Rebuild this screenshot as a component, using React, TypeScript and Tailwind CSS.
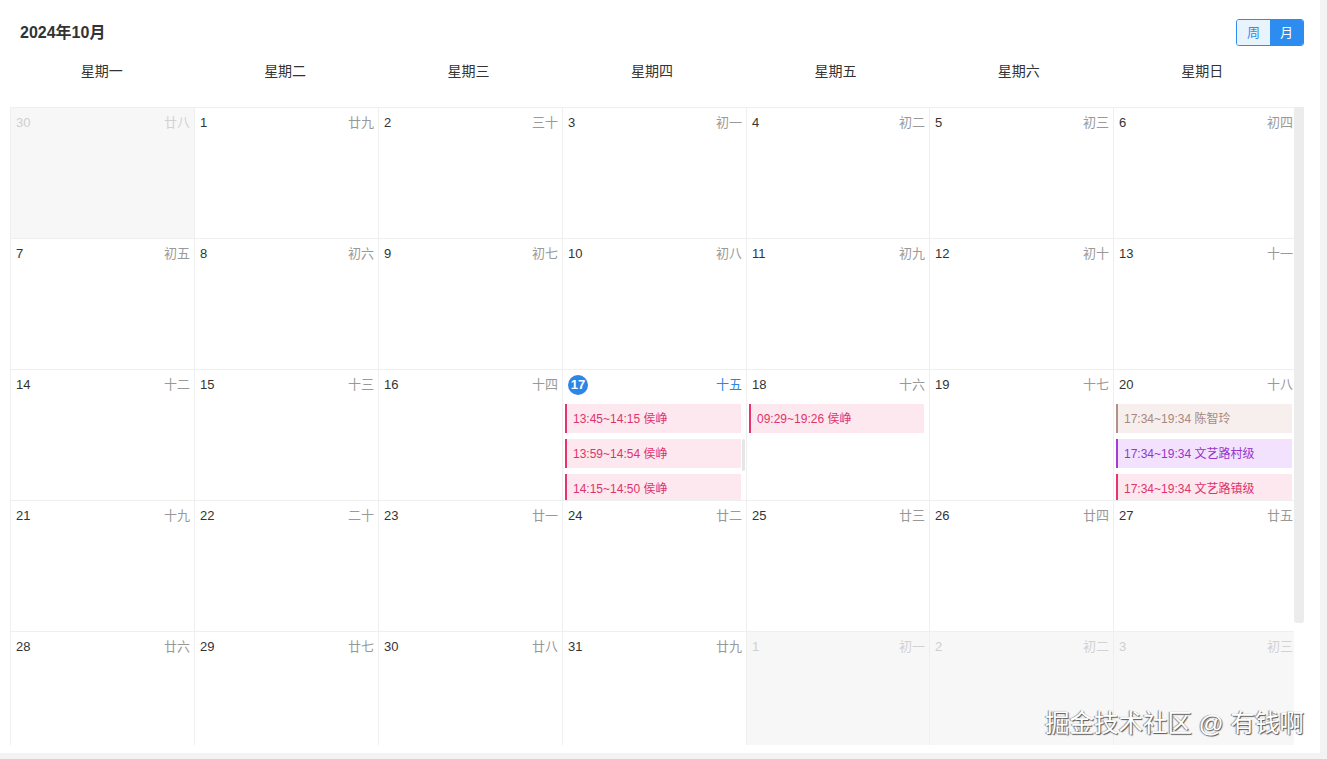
type CalEvent = { time: string; name: string; tone: "pink" | "brown" | "purple" };

type Day = { num: number; lunar: string; other?: boolean; today?: boolean; events?: CalEvent[] };

const toneClass: Record<CalEvent["tone"], string> = {
  pink: "bg-[#fde8ef] border-[#e8336d] text-[#e0336a]",
  brown: "bg-[#f6efed] border-[#b39188] text-[#a8887e]",
  purple: "bg-[#f2e2fe] border-[#a23bd8] text-[#9834cc]",
};

const weekNames = ["星期一", "星期二", "星期三", "星期四", "星期五", "星期六", "星期日"];

const lunarOct = [
  "廿九", "三十", "初一", "初二", "初三", "初四", "初五", "初六", "初七", "初八",
  "初九", "初十", "十一", "十二", "十三", "十四", "十五", "十六", "十七", "十八",
  "十九", "二十", "廿一", "廿二", "廿三", "廿四", "廿五", "廿六", "廿七", "廿八", "廿九",
];

const eventsByDay: Record<number, CalEvent[]> = {
  17: [
    { time: "13:45~14:15", name: "侯峥", tone: "pink" },
    { time: "13:59~14:54", name: "侯峥", tone: "pink" },
    { time: "14:15~14:50", name: "侯峥", tone: "pink" },
  ],
  18: [{ time: "09:29~19:26", name: "侯峥", tone: "pink" }],
  20: [
    { time: "17:34~19:34", name: "陈智玲", tone: "brown" },
    { time: "17:34~19:34", name: "文艺路村级", tone: "purple" },
    { time: "17:34~19:34", name: "文艺路镇级", tone: "pink" },
  ],
};

const days: Day[] = [
  { num: 30, lunar: "廿八", other: true },
  ...lunarOct.map((lunar, i) => ({
    num: i + 1,
    lunar,
    today: i + 1 === 17,
    events: eventsByDay[i + 1],
  })),
  { num: 1, lunar: "初一", other: true },
  { num: 2, lunar: "初二", other: true },
  { num: 3, lunar: "初三", other: true },
];

const DayCell = ({ day }: { day: Day }) => {
  return (
    <div
      className={`relative h-[131px] overflow-hidden border-r border-b border-[#efefef] ${
        day.other ? "bg-[#f7f7f7]" : "bg-white"
      }`}
    >
      <div className="flex items-center justify-between h-[29px] pl-[5px] pr-[4px] pt-[1px] text-[13px]">
        {day.today ? (
          <span className="flex items-center justify-center w-[20px] h-[20px] rounded-full bg-[#2b86e8] text-white font-bold text-[13px]">
            {day.num}
          </span>
        ) : (
          <span className={day.other ? "text-[#cfcfcf]" : "text-[#333]"}>{day.num}</span>
        )}
        <span className={day.other ? "text-[#d2d2d2]" : day.today ? "text-[#2b86e8]" : "text-[#999]"}>
          {day.lunar}
        </span>
      </div>
      {day.events && (
        <div className="flex flex-col gap-[6px] mt-[5px] ml-[2px] mr-[5px]">
          {day.events.map((ev, i) => (
            <div
              key={i}
              className={`h-[29px] shrink-0 flex items-center border-l-2 pl-[6px] text-[12px] whitespace-nowrap ${toneClass[ev.tone]}`}
            >
              {ev.time} {ev.name}
            </div>
          ))}
        </div>
      )}
      {day.today && <div className="absolute right-[1px] top-[69px] w-[3px] h-[32px] rounded bg-[#e6e6e6]" />}
    </div>
  );
};

export default function App() {
  return (
    <div
      className="w-[1327px] h-[759px] bg-[#f3f3f3] overflow-hidden relative"
      style={{ fontFamily: '"Liberation Sans", "Noto Sans CJK SC", sans-serif' }}
    >
      <div className="w-[1320px] h-[753px] bg-white flex flex-col">
        <div className="flex items-center justify-between pl-[20px] pr-[16px] pt-[19px] h-[46px]">
          <h1 className="text-[16px] font-bold text-[#333]">2024年10月</h1>
          <div className="flex h-[27px] rounded-[3px] border border-[#2d8cf0] overflow-hidden text-[13px]">
            <button className="w-[33px] bg-[#e8f3fe] text-[#2d8cf0]">周</button>
            <button className="w-[33px] bg-[#2d8cf0] text-white">月</button>
          </div>
        </div>

        <div className="grid grid-cols-7 w-[1284px] ml-[10px] h-[61px] items-center pb-[10px] text-[14px] text-[#333]">
          {weekNames.map((w) => (
            <div key={w} className="text-center">
              {w}
            </div>
          ))}
        </div>

        <div className="flex ml-[10px] h-[638px]">
          <div className="w-[1284px] overflow-hidden border-l border-t border-[#efefef]">
            <div className="grid grid-cols-[184px_184px_184px_184px_183px_184px_184px]">
              {days.map((d, i) => (
                <DayCell key={i} day={d} />
              ))}
            </div>
          </div>
          <div className="w-[10px]">
            <div className="h-[516px] bg-[#ececec] rounded-b-[3px]" />
          </div>
        </div>
      </div>

      <div
        className="absolute left-[1045px] top-[706px] text-[24.5px] text-white whitespace-nowrap"
        style={{ textShadow: "1px 1px 1px #555, -1px 0 1px #888" }}
      >
        掘金技术社区 @ 有钱啊
      </div>
    </div>
  );
}
